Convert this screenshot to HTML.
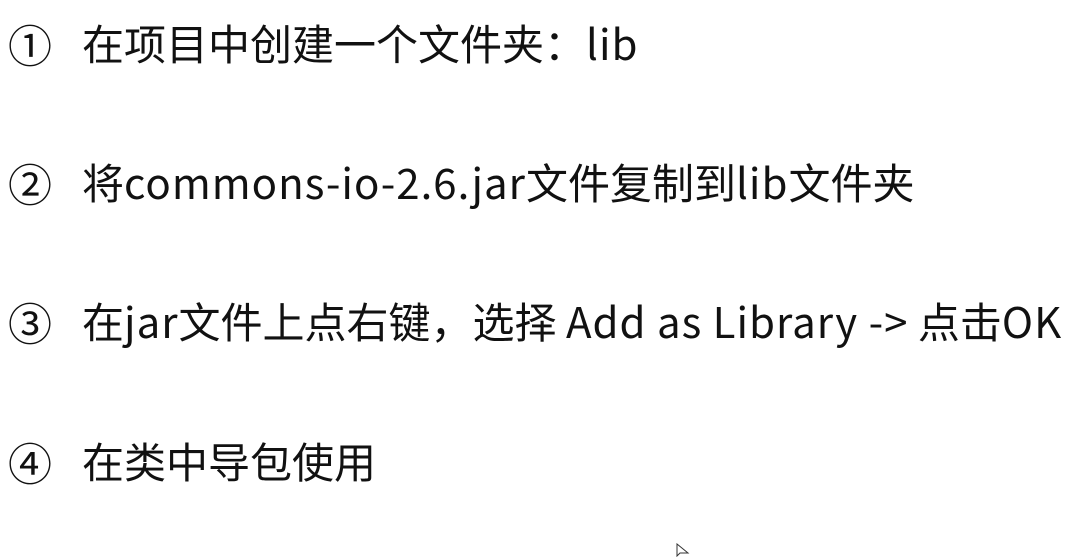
<html><head><style>
body{margin:0;width:1090px;height:556px;background:#fff;overflow:hidden;position:relative;font-family:"Noto Sans CJK SC",sans-serif;color:#111;}
.n{position:absolute;left:8px;font-size:44px;line-height:1;}
.t{position:absolute;left:82px;font-size:42px;line-height:1;white-space:nowrap;}
.l{letter-spacing:1px;}
</style></head><body>
<div class="n" style="top:21px">①</div><div class="t" style="top:22px">在项目中创建一个文件夹：<span class="l">lib</span></div>
<div class="n" style="top:160px">②</div><div class="t" style="top:161px">将<span class="l">commons-io-2.6.jar</span>文件复制到<span class="l">lib</span>文件夹</div>
<div class="n" style="top:299px">③</div><div class="t" style="top:300px">在<span class="l">jar</span>文件上点右键，选择 <span class="l">Add as Library -&gt;</span> 点击<span class="l">OK</span></div>
<div class="n" style="top:439px">④</div><div class="t" style="top:440px">在类中导包使用</div>
<svg style="position:absolute;left:676px;top:543px" width="14" height="14"><path d="M1 1 L1 13 L4 10 L12 10 Z" fill="#fff" stroke="#333" stroke-width="1"/></svg>
</body></html>
